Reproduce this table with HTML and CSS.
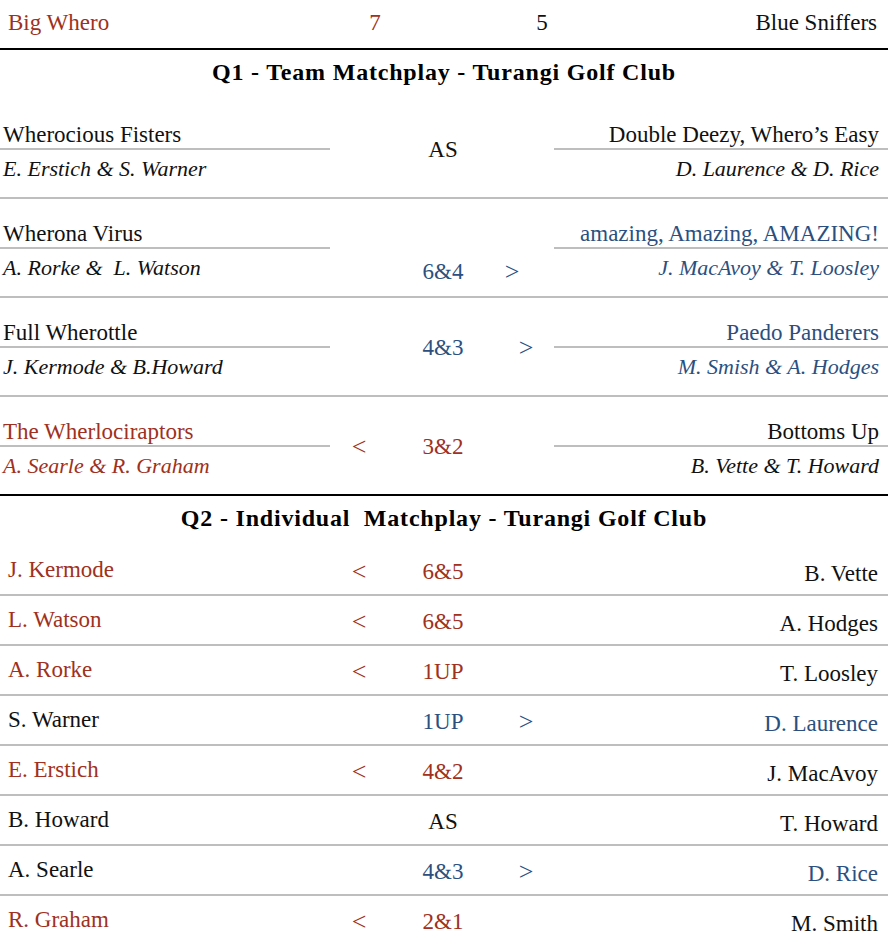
FILE: index.html
```html
<!DOCTYPE html>
<html lang="en">
<head>
<meta charset="utf-8">
<title>Big Whero vs Blue Sniffers</title>
<link rel="stylesheet" href="styles.css">
</head>
<body>
<div class="page">
  <div class="header">
    <div class="h-left red">Big Whero</div>
    <div class="h-num red">7</div>
    <div></div>
    <div class="h-num">5</div>
    <div class="h-right">Blue Sniffers</div>
  </div>

  <div class="title">Q1 - Team Matchplay - Turangi Golf Club</div>

  <div class="cols team-row">
    <div class="team left">
      <div class="tname">Wherocious Fisters</div>
      <div class="tplayers">E. Erstich &amp; S. Warner</div>
    </div>
    <div class="arrow"></div>
    <div class="score">AS</div>
    <div class="arrow"></div>
    <div class="team right">
      <div class="tname">Double Deezy, Whero’s Easy</div>
      <div class="tplayers">D. Laurence &amp; D. Rice</div>
    </div>
  </div>

  <div class="cols team-row low">
    <div class="team left">
      <div class="tname">Wherona Virus</div>
      <div class="tplayers">A. Rorke &amp;&nbsp; L. Watson</div>
    </div>
    <div class="arrow"></div>
    <div class="score blue">6&amp;4</div>
    <div class="arrow r blue">&gt;</div>
    <div class="team right blue">
      <div class="tname">amazing, Amazing, AMAZING!</div>
      <div class="tplayers">J. MacAvoy &amp; T. Loosley</div>
    </div>
  </div>

  <div class="cols team-row">
    <div class="team left">
      <div class="tname">Full Wherottle</div>
      <div class="tplayers">J. Kermode &amp; B.Howard</div>
    </div>
    <div class="arrow"></div>
    <div class="score blue">4&amp;3</div>
    <div class="arrow r blue">&gt;</div>
    <div class="team right blue">
      <div class="tname">Paedo Panderers</div>
      <div class="tplayers">M. Smish &amp; A. Hodges</div>
    </div>
  </div>

  <div class="cols team-row last">
    <div class="team left red">
      <div class="tname">The Wherlociraptors</div>
      <div class="tplayers">A. Searle &amp; R. Graham</div>
    </div>
    <div class="arrow red">&lt;</div>
    <div class="score red">3&amp;2</div>
    <div class="arrow"></div>
    <div class="team right">
      <div class="tname">Bottoms Up</div>
      <div class="tplayers">B. Vette &amp; T. Howard</div>
    </div>
  </div>

  <div class="title">Q2 - Individual&nbsp; Matchplay - Turangi Golf Club</div>

  <div class="cols ind-row">
    <div class="pl red">J. Kermode</div>
    <div class="mid arr red">&lt;</div>
    <div class="mid red">6&amp;5</div>
    <div class="mid"></div>
    <div class="pr">B. Vette</div>
  </div>
  <div class="cols ind-row">
    <div class="pl red">L. Watson</div>
    <div class="mid arr red">&lt;</div>
    <div class="mid red">6&amp;5</div>
    <div class="mid"></div>
    <div class="pr">A. Hodges</div>
  </div>
  <div class="cols ind-row">
    <div class="pl red">A. Rorke</div>
    <div class="mid arr red">&lt;</div>
    <div class="mid red">1UP</div>
    <div class="mid"></div>
    <div class="pr">T. Loosley</div>
  </div>
  <div class="cols ind-row">
    <div class="pl">S. Warner</div>
    <div class="mid"></div>
    <div class="mid blue">1UP</div>
    <div class="mid arr blue">&gt;</div>
    <div class="pr blue">D. Laurence</div>
  </div>
  <div class="cols ind-row">
    <div class="pl red">E. Erstich</div>
    <div class="mid arr red">&lt;</div>
    <div class="mid red">4&amp;2</div>
    <div class="mid"></div>
    <div class="pr">J. MacAvoy</div>
  </div>
  <div class="cols ind-row">
    <div class="pl">B. Howard</div>
    <div class="mid"></div>
    <div class="mid">AS</div>
    <div class="mid"></div>
    <div class="pr">T. Howard</div>
  </div>
  <div class="cols ind-row">
    <div class="pl">A. Searle</div>
    <div class="mid"></div>
    <div class="mid blue">4&amp;3</div>
    <div class="mid arr blue">&gt;</div>
    <div class="pr blue">D. Rice</div>
  </div>
  <div class="cols ind-row end">
    <div class="pl red">R. Graham</div>
    <div class="mid arr red">&lt;</div>
    <div class="mid red">2&amp;1</div>
    <div class="mid"></div>
    <div class="pr">M. Smith</div>
  </div>
</div>
</body>
</html>
```

FILE: styles.css
```css
html, body {
  margin: 0;
  padding: 0;
  background: #ffffff;
}

body {
  font-family: "Liberation Serif", "DejaVu Serif", serif;
  color: #111111;
}

.page {
  width: 888px;
}

.red { color: #a03020; }
.blue { color: #2b5080; }

/* Header */
.header {
  display: grid;
  grid-template-columns: 330px 90px 78px 88px 1fr;
  height: 48px;
  border-bottom: 2px solid #000000;
  font-size: 23px;
  line-height: 46px;
}
.h-left { padding-left: 8px; }
.h-num { text-align: center; }
.h-right { text-align: right; padding-right: 11px; }

/* Section titles */
.title {
  height: 50px;
  line-height: 44px;
  text-align: center;
  font-weight: bold;
  font-size: 24px;
  letter-spacing: 0.8px;
  color: #000000;
}

/* Column grid shared by all match rows */
.cols {
  display: grid;
  grid-template-columns: 330px 58px 110px 56px 1fr;
}

/* Q1 team rows */
.team-row {
  height: 97px;
  border-bottom: 2px solid #bebebe;
}
.team-row.last {
  border-bottom-color: #000000;
}

.tname {
  font-size: 23px;
  line-height: 26px;
  padding-top: 22px;
  border-bottom: 2px solid #bebebe;
  white-space: nowrap;
}
.tplayers {
  font-style: italic;
  font-size: 22px;
  line-height: 26px;
  padding-top: 6px;
  white-space: nowrap;
}
.team.left .tname,
.team.left .tplayers { padding-left: 3px; }
.team.right { text-align: right; }
.team.right .tname,
.team.right .tplayers { padding-right: 9px; }

.score,
.arrow {
  font-size: 23px;
  line-height: 26px;
  padding-top: 37px;
  text-align: center;
}
.arrow { font-size: 26px; }
.low .score,
.low .arrow { padding-top: 60px; }
.low .arrow.r { padding-right: 28px; }

/* Q2 individual rows */
.ind-row {
  height: 48px;
  border-bottom: 2px solid #bebebe;
  font-size: 23px;
  line-height: 26px;
}
.ind-row.end { border-bottom: none; }
.pl {
  padding-top: 11px;
  padding-left: 8px;
}
.mid {
  padding-top: 13px;
  text-align: center;
}
.mid.arr { font-size: 26px; }
.pr {
  padding-top: 15px;
  padding-right: 10px;
  text-align: right;
}
```
